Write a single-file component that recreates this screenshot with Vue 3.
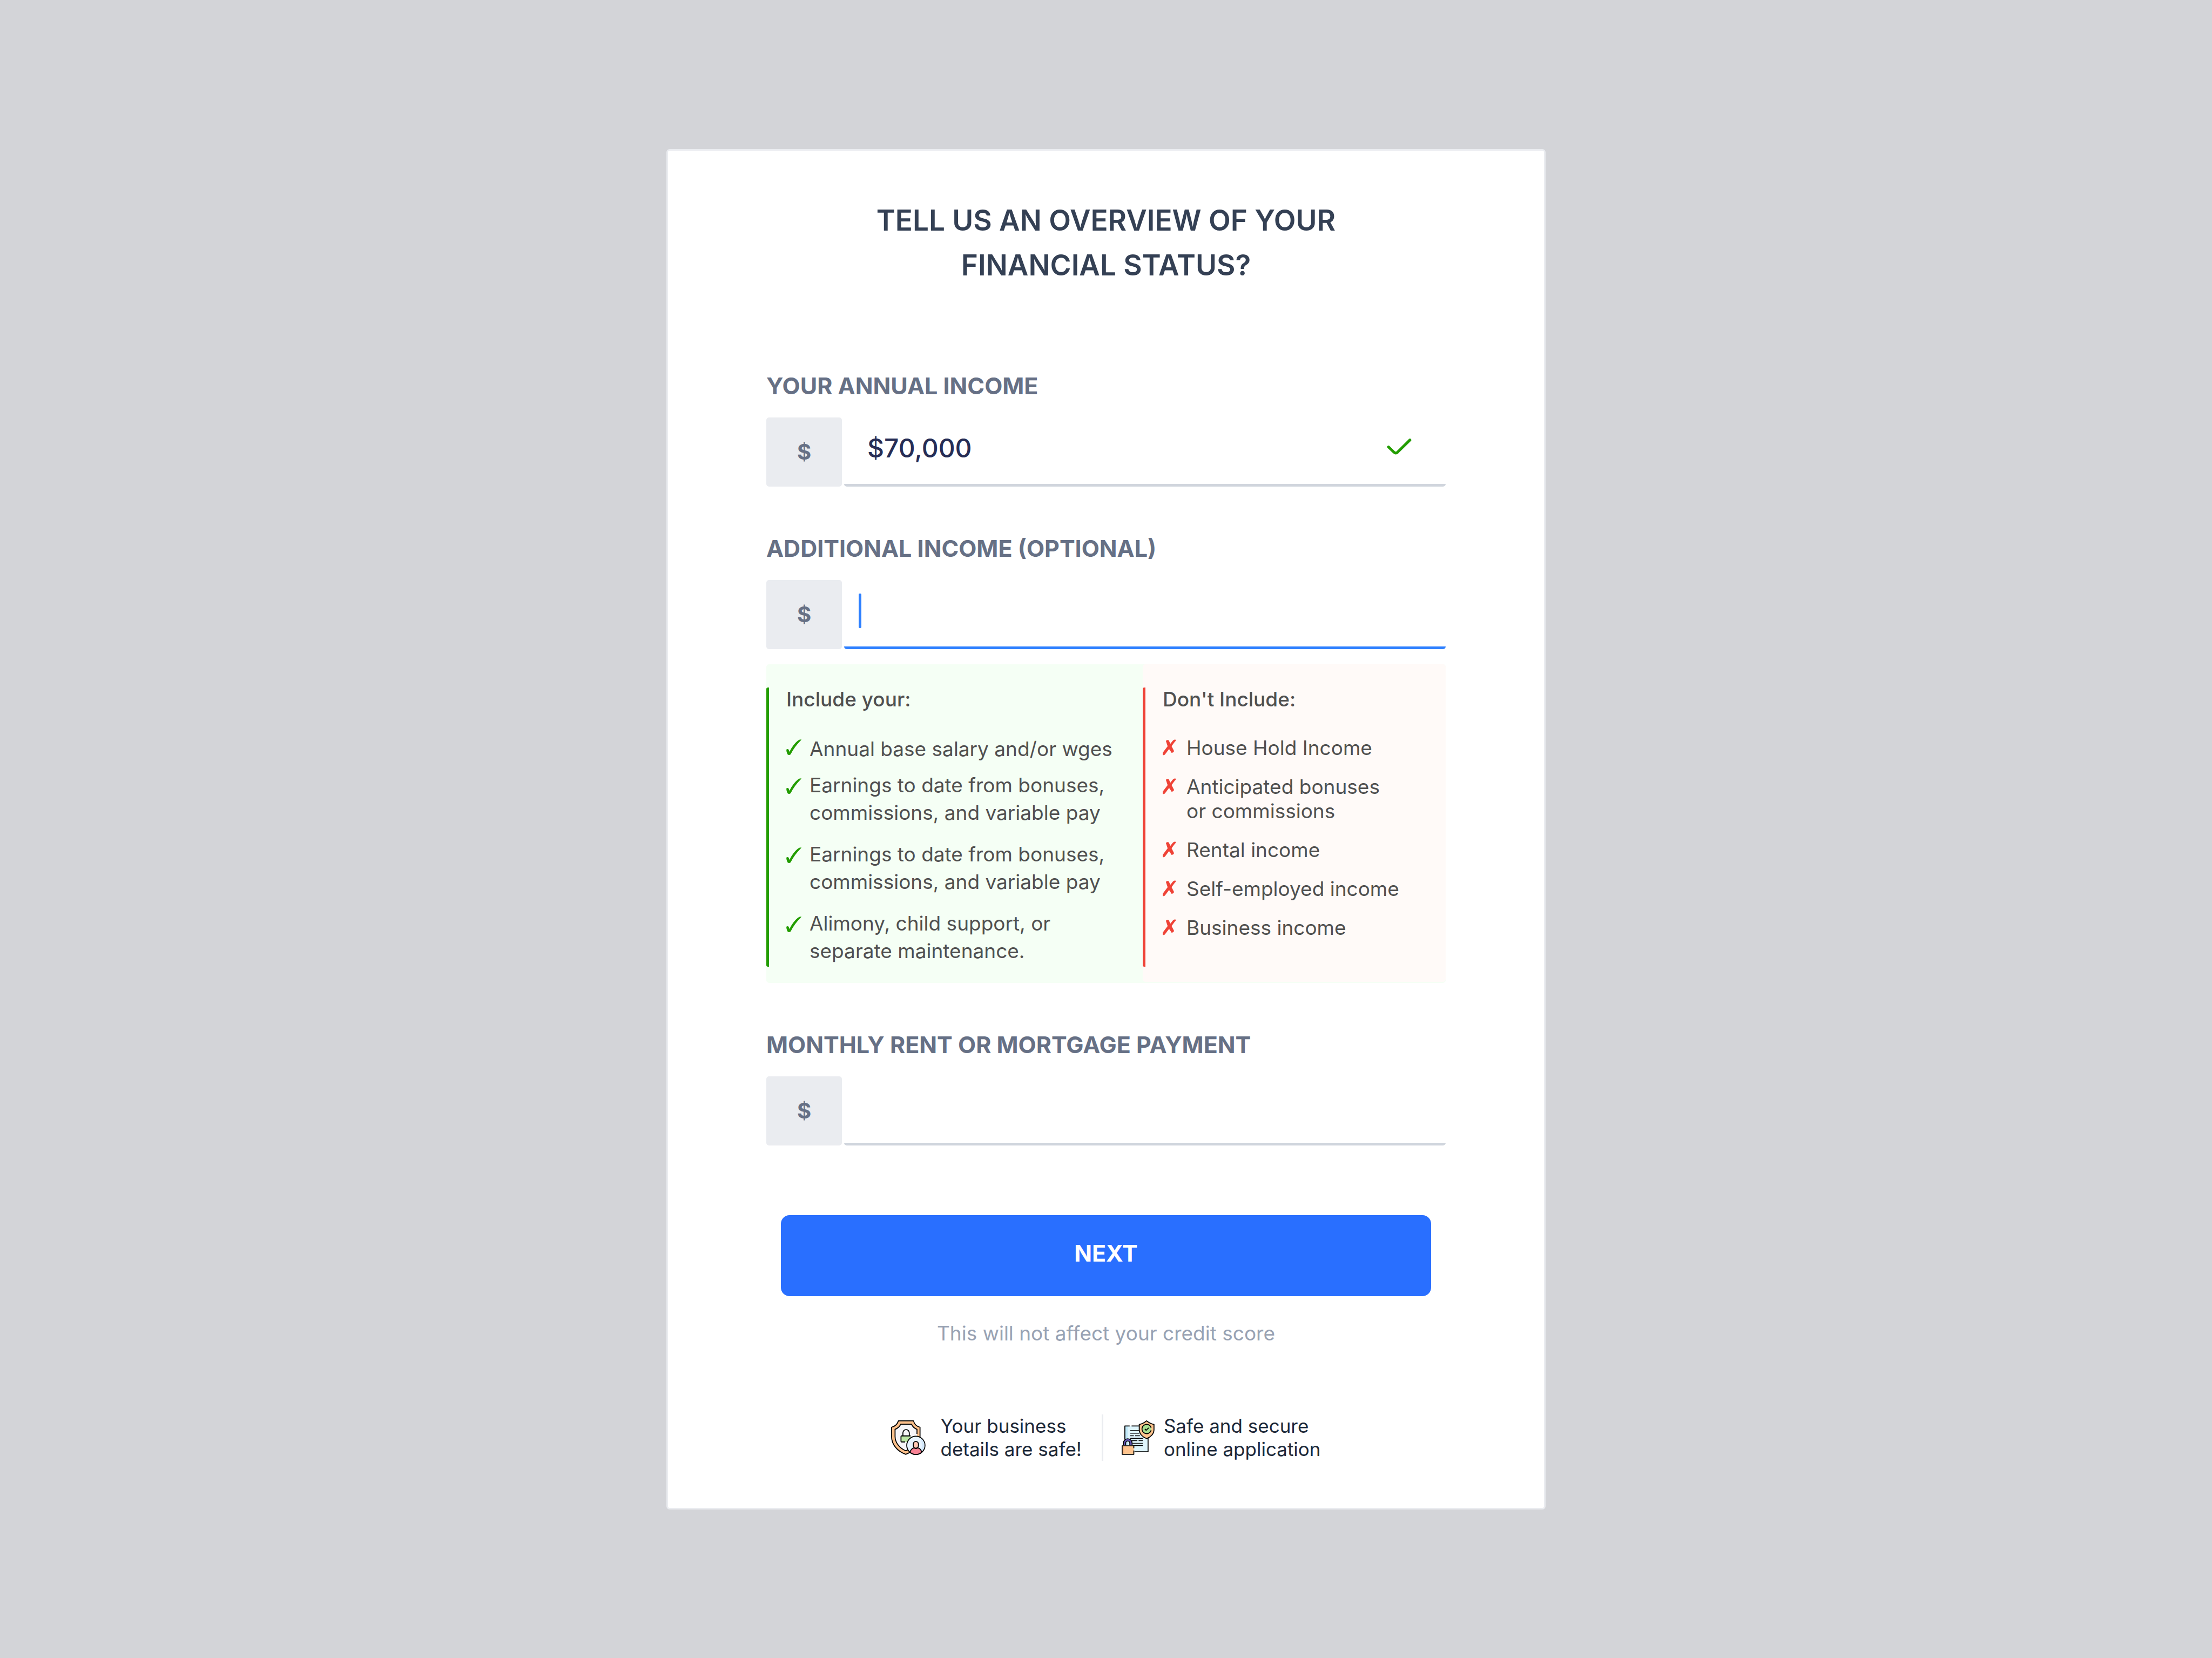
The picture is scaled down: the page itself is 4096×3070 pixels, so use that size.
<script setup>
import { ref } from 'vue'

const annual = ref('$70,000')
const additional = ref('')
const rent = ref('')

const include = [
  ['Annual base salary and/or wges'],
  ['Earnings to date from bonuses,', 'commissions, and variable pay'],
  ['Earnings to date from bonuses,', 'commissions, and variable pay'],
  ['Alimony, child support, or', 'separate maintenance.'],
]
const exclude = [
  ['House Hold Income'],
  ['Anticipated bonuses', 'or commissions'],
  ['Rental income'],
  ['Self-employed income'],
  ['Business income'],
]
</script>

<template>
  <main class="page">
    <form class="card" @submit.prevent>
      <h1 class="title">TELL US AN OVERVIEW OF YOUR<br />FINANCIAL STATUS?</h1>

      <div class="field">
        <label class="label" for="annual">YOUR ANNUAL INCOME</label>
        <div class="row">
          <span class="prefix">$</span>
          <div class="control">
            <input id="annual" v-model="annual" class="input" type="text" />
            <svg class="valid" viewBox="0 0 153 102" aria-hidden="true">
              <path d="M9 53 L42 85 Q54 97 66 86 L144 9" />
            </svg>
          </div>
        </div>
      </div>

      <div class="field">
        <label class="label" for="additional">ADDITIONAL INCOME (OPTIONAL)</label>
        <div class="row">
          <span class="prefix">$</span>
          <div class="control active">
            <span class="caret"></span>
            <input id="additional" v-model="additional" class="input" type="text" />
          </div>
        </div>
        <div class="hints">
          <section class="hint include">
            <div class="hint-body">
              <h2 class="hint-title">Include your:</h2>
              <ul class="list">
                <li v-for="(lines, i) in include" :key="i" class="item">
                  <svg class="mark" viewBox="0 0 92 168" aria-hidden="true">
                    <path transform="translate(0 43)" d="M0 62 Q8 57 13 61 Q17 66 19 76 Q42 30 70 8 Q80 0 92 1 Q92 4 86 9 Q50 45 27 90 Q22 96 14 95 Q7 94 4 84 Q0 70 0 62Z" />
                  </svg>
                  <span><span v-for="line in lines" :key="line" class="line">{{ line }}</span></span>
                </li>
              </ul>
            </div>
          </section>
          <section class="hint exclude">
            <div class="hint-body">
              <h2 class="hint-title">Don't Include:</h2>
              <ul class="list">
                <li v-for="(lines, i) in exclude" :key="i" class="item">
                  <svg class="mark" viewBox="0 0 81 152" aria-hidden="true">
                    <path transform="translate(0 27)" d="M22 7 Q32 0 37 5 L47 28 L66 5 Q74 -1 81 1 Q80 6 74 11 L53 39 L69 70 Q66 78 57 79 L40 54 L12 91 Q8 95 1 93 Q-1 85 3 80 L33 40Z" />
                  </svg>
                  <span><span v-for="line in lines" :key="line" class="line">{{ line }}</span></span>
                </li>
              </ul>
            </div>
          </section>
        </div>
      </div>

      <div class="field">
        <label class="label" for="rent">MONTHLY RENT OR MORTGAGE PAYMENT</label>
        <div class="row">
          <span class="prefix">$</span>
          <div class="control">
            <input id="rent" v-model="rent" class="input" type="text" />
          </div>
        </div>
      </div>

      <button class="next" type="submit">NEXT</button>
      <p class="note">This will not affect your credit score</p>

      <footer class="trust">
        <div class="badge">
          <svg class="badge-icon" viewBox="0 0 216 216" aria-hidden="true">
            <path fill="#fdc08b" d="M46 3 H140 C145 22 160 38 181 43 V100 C181 150 140 195 92 212 C40 195 3 150 3 100 V43 C24 38 40 22 46 3Z" />
            <path fill="#f7f5f8" stroke="none" d="M60 24 H128 C134 38 146 50 162 56 V100 C160 140 130 175 92 190 C55 175 25 140 25 100 V56 C40 50 54 40 60 24Z" />
            <path d="M162 84 V56 C146 50 134 38 128 24 H60 C54 40 40 50 25 56 V100 C25 140 55 175 92 190 L106 184" />
            <path fill="#f7f5f8" d="M74 97 V78 a20 20 0 0 1 40 0 V97" />
            <rect fill="#bde6a5" stroke="none" x="62" y="97" width="60" height="38" rx="4" />
            <path d="M122 97 H66 Q62 97 62 101 V131 Q62 135 66 135 H88" />
            <circle fill="#e8f4ff" cx="155" cy="156" r="57" />
            <path fill="#d3e8fb" stroke="none" d="M185 112 Q200 156 185 196 Q209 180 209 156 Q207 126 185 112Z" />
            <rect fill="#ffc8b4" x="139" y="132" width="32" height="42" rx="16" />
            <path fill="#f78294" d="M118 199 C122 182 136 172 145 172 Q155 180 165 172 C176 172 188 182 192 199 Q176 213 155 213 Q134 213 118 199Z" />
          </svg>
          <p>Your business<br />details are safe!</p>
        </div>
        <div class="badge second">
          <svg class="badge-icon" viewBox="0 0 216 216" aria-hidden="true">
            <rect fill="#dff5fc" stroke="none" x="20" y="35" width="145" height="161" />
            <rect fill="#bfe8f8" stroke="none" x="20" y="35" width="18" height="161" />
            <path d="M50 35 H20 V120 M62 35 H112 M165 110 V196 H80" />
            <path stroke-width="5" d="M54 64 H108 M54 80 H110 M54 96 H76 M84 96 H114 M54 112 H132 M54 127 H98 M106 127 H132 M68 143 H132 M68 158 H132" />
            <path stroke-width="20" d="M18 156 V142 a20 20 0 0 1 40 0 V156" />
            <path class="shackle" stroke-width="9" d="M18 156 V142 a20 20 0 0 1 40 0 V156" />
            <rect fill="#ffc48e" stroke="none" x="2" y="158" width="74" height="54" />
            <rect fill="#fbb780" stroke="none" x="2" y="158" width="14" height="54" />
            <path d="M76 174 V159 H3 V212 H76 V188" />
            <path fill="#ffc48e" d="M156 3 C170 15 186 22 202 26 V58 C202 85 180 105 156 114 C132 105 110 85 110 58 V26 C126 22 142 15 156 3Z" />
            <circle fill="#a9e190" stroke="none" cx="156" cy="54" r="29" />
            <path d="M184 46 A29 29 0 1 0 184 62 M145 53 L153 62 L169 47" />
          </svg>
          <p>Safe and secure<br />online application</p>
        </div>
      </footer>
    </form>
  </main>
</template>

<style>
body {
  margin: 0;
  background: #d3d4d8;
}
</style>

<style scoped>
* {
  box-sizing: border-box;
}
.page {
  min-height: 100vh;
  display: flex;
  align-items: center;
  justify-content: center;
  font-family: Inter, "Liberation Sans", sans-serif;
}
.card {
  width: 100%;
  max-width: 1628px;
  padding: 88px 182px 87px;
  background: #fff;
  border: 3px solid #eaecf0;
  border-radius: 6px;
}
h1,
h2,
p,
ul {
  margin: 0;
  padding: 0;
}
.title {
  margin-bottom: 151px;
  font-size: 53px;
  line-height: 83px;
  font-weight: 600;
  text-align: center;
  color: #344054;
}
.field {
  margin-bottom: 84px;
}
.label {
  display: block;
  margin-bottom: 29px;
  font-size: 43px;
  line-height: 60px;
  font-weight: 700;
  color: #667085;
}
.row {
  display: flex;
  gap: 4px;
  height: 128px;
}
.prefix {
  width: 140px;
  display: flex;
  align-items: center;
  justify-content: center;
  border-radius: 5px;
  background: #eaecf0;
  font-size: 40px;
  font-weight: 700;
  color: #667085;
}
.control {
  flex: 1;
  display: flex;
  align-items: center;
  padding: 0 63px 8px 43px;
  border-bottom: 5px solid #d0d5dd;
  border-radius: 5px;
}
.input {
  flex: 1;
  min-width: 0;
  padding: 0;
  border: 0;
  outline: 0;
  background: none;
  font: 500 48px/60px Inter, "Liberation Sans", sans-serif;
  color: #262d55;
}
.valid {
  width: 46px;
  height: 30px;
  margin-bottom: 6px;
  fill: none;
  stroke: #239d00;
  stroke-width: 17;
  stroke-linecap: round;
}
.active {
  padding-left: 27px;
  border-color: #2e80ff;
}
.caret {
  width: 5px;
  height: 64px;
  border-radius: 2px;
  background: #2e80ff;
}
.hints {
  display: flex;
  margin-top: 28px;
  padding-bottom: 2px;
  border-radius: 5px;
  background: #f5fff5;
}
.hint {
  padding: 43px 0 28px;
  border-radius: 5px;
}
.include {
  flex: 697;
}
.exclude {
  flex: 561;
  background: #fffaf8;
}
.hint-body {
  min-height: 517px;
  padding-left: 32px;
  border-left: 5px solid;
  border-radius: 3px;
}
.include .hint-body {
  border-color: #239d00;
}
.exclude .hint-body {
  border-color: #ef4337;
}
.hint-title {
  font-size: 37px;
  line-height: 43px;
  font-weight: 500;
  color: #505050;
}
.list {
  list-style: none;
  font-size: 37px;
  color: #505050;
}
.line {
  display: block;
}
.item {
  display: flex;
}
.include .list {
  margin-top: 40px;
  line-height: 51px;
}
.include .item + .item {
  margin-top: 26px;
}
.include .item:first-child {
  line-height: 61px;
}
.include .item:nth-child(2) {
  margin-top: 11px;
}
.include .mark {
  width: 28px;
  height: 51px;
  margin-right: 15px;
  fill: #239d00;
}
.exclude .list {
  margin-top: 46px;
  line-height: 45px;
}
.exclude .item + .item {
  margin-top: 27px;
}
.exclude .mark {
  width: 24px;
  height: 45px;
  margin-right: 20px;
  fill: #ef4337;
  stroke: #ef4337;
  stroke-width: 4;
  stroke-linejoin: round;
}
.next {
  display: block;
  width: calc(100% - 54px);
  height: 150px;
  margin: 129px auto 0;
  padding: 0 0 10px;
  border: 0;
  border-radius: 16px;
  background: #296fff;
  font: 700 43px/60px Inter, "Liberation Sans", sans-serif;
  color: #fff;
}
.note {
  margin-top: 46px;
  font-size: 37px;
  line-height: 45px;
  text-align: center;
  color: #98a2b3;
}
.trust {
  display: flex;
  justify-content: center;
  margin-top: 128px;
  font-size: 35px;
  line-height: 43px;
  color: #1d2939;
}
.badge {
  display: flex;
  align-items: center;
}
.badge-icon {
  width: 64px;
  height: 64px;
  margin-right: 27px;
  fill: none;
  stroke: #000;
  stroke-width: 6;
  stroke-linejoin: round;
}
.shackle {
  stroke: #6457b8;
}
.second {
  margin-left: 37px;
  padding-left: 34px;
  border-left: 3px solid #eaecf0;
}
.second .badge-icon {
  margin-right: 14px;
}
</style>
